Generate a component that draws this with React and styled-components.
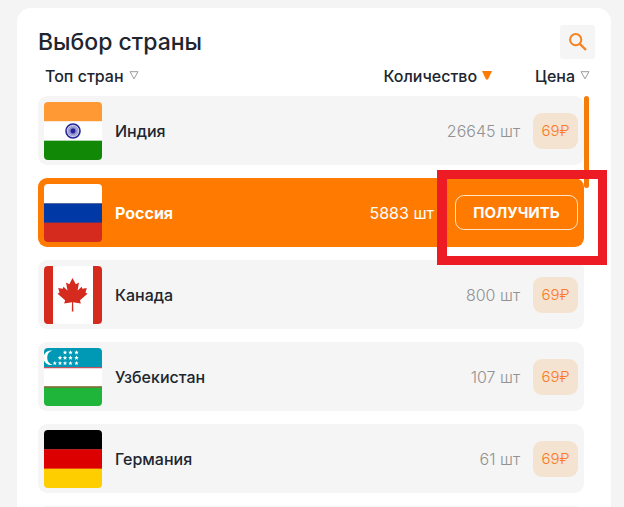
import React from "react";
import styled, { createGlobalStyle, css } from "styled-components";

const GlobalStyle = createGlobalStyle`
  * { box-sizing: border-box; }
  body {
    margin: 0;
    background: #f4f4f4;
    color: #20252f;
    font-family: Inter, "Noto Sans", sans-serif;
    font-size: 16px;
    line-height: 24px;
  }
  button { font: inherit; color: inherit; cursor: pointer; }
`;

const Page = styled.main`
  height: 100vh;
  padding: 8px 13px 0 17px;
  overflow: hidden;
`;

const Card = styled.section`
  height: 100%;
  padding: 17px 16px 0 21px;
  border-radius: 14px 14px 0 0;
  background: #fff;
`;

const TitleBar = styled.header`
  display: flex;
  align-items: center;
  justify-content: space-between;
  height: 34px;
`;

const Title = styled.h1`
  margin: 0;
  font-size: 23px;
  line-height: 34px;
  font-weight: 500;
`;

const SearchButton = styled.button`
  display: grid;
  place-items: center;
  width: 35px;
  height: 34px;
  padding: 0;
  border: 0;
  border-radius: 3px;
  background: #f5f5f6;
`;

const ListArea = styled.div`
  position: relative;
  padding-right: 5px;
`;

const Table = styled.table`
  display: block;
`;

const Head = styled.thead`
  display: block;
`;

const HeadRow = styled.tr`
  display: flex;
  align-items: center;
  gap: 43px;
  height: 37px;
  padding: 0 0 4px 7px;
`;

const HeadCell = styled.th`
  padding: 0;
  text-align: left;
  font-weight: 500;
  flex: ${(p) => (p.$grow ? "1" : "none")};
`;

const SortButton = styled.button`
  display: flex;
  align-items: center;
  gap: 5px;
  padding: 0;
  border: 0;
  background: none;
`;

const Body = styled.tbody`
  display: flex;
  flex-direction: column;
  gap: 13px;
  padding-right: 6px;
`;

const Row = styled.tr`
  position: relative;
  display: flex;
  align-items: center;
  height: 69px;
  padding: 0 6px;
  border-radius: 9px;
  background: #f5f5f5;
  ${(p) =>
    p.$active &&
    css`
      background: #ff7a00;
      color: #fff;
    `}
`;

const Cell = styled.td`
  padding: 0;
`;

const NameCell = styled(Cell)`
  flex: 1;
  padding-left: 13px;
  font-weight: ${(p) => (p.$active ? 700 : 500)};
`;

const CountCell = styled(Cell)`
  padding-right: ${(p) => (p.$active ? "21px" : "13px")};
  font-weight: ${(p) => (p.$active ? 400 : 300)};
  color: ${(p) => (p.$active ? "#fff" : "#929292")};
`;

const Flag = styled.svg`
  display: block;
  width: 58px;
  height: 58px;
  border-radius: 4px;
`;

const Price = styled.span`
  display: grid;
  place-items: center;
  width: 45px;
  height: 36px;
  border-radius: 9px;
  background: #f4e3d0;
  color: #fb7a28;
  font-size: 15px;
  font-weight: 300;
`;

const GetButton = styled.button`
  display: block;
  width: 123px;
  height: 35px;
  padding: 0;
  border: 1px solid #ffe4c8;
  border-radius: 9px;
  background: transparent;
  font-size: 15px;
  font-weight: 700;
`;

const Highlight = styled.span`
  position: absolute;
  z-index: 2;
  top: -8px;
  right: -23px;
  bottom: -18px;
  width: 170px;
  border: 9px solid #ed1b24;
  border-left-width: 10px;
  pointer-events: none;
`;

const ScrollThumb = styled.span`
  position: absolute;
  top: 37px;
  right: 6px;
  width: 5px;
  height: 92px;
  border-radius: 3px;
  background: #f57c08;
`;

function SearchIcon() {
  return (
    <svg width="18" height="18" viewBox="0 0 18 18" fill="none" stroke="#f5821f" strokeWidth="2" aria-hidden="true">
      <circle cx="6.7" cy="6.7" r="5.6" />
      <path d="M10.6 10.6 17 17" strokeWidth="2.3" />
    </svg>
  );
}

function SortIcon({ active }) {
  return (
    <svg width="10" height="9" viewBox="0 0 10 9" aria-hidden="true">
      <path
        d={active ? "M0 0H10L6 8.5H4Z" : "M1 .7H9L5 7.8Z"}
        fill={active ? "#ff7a00" : "none"}
        stroke={active ? "none" : "#9c9c9c"}
        strokeWidth="1"
      />
    </svg>
  );
}

function Stripes({ colors }) {
  return colors.map((color, i) => (
    <rect key={i} y={(i * 58) / 3} width="58" height="19.6" fill={color} />
  ));
}

const uzbekStars = [
  [21, 4.5], [26.5, 4.5], [32.5, 4.5],
  [16, 9.8], [21, 9.8], [26.5, 9.8], [32.5, 9.8],
  [10.8, 15.2], [16, 15.2], [21, 15.2], [26.5, 15.2], [32.5, 15.2],
];

const flagArt = {
  india: (
    <>
      <Stripes colors={["#ff9933", "#ffffff", "#128807"]} />
      <circle cx="29" cy="29" r="7" fill="#dcdcf2" stroke="#24249a" strokeWidth="1.6" />
      <g stroke="#24249a" strokeWidth=".4">
        {Array.from({ length: 12 }, (_, i) => (
          <path key={i} d="M29 23.5V34.5" transform={`rotate(${i * 15} 29 29)`} />
        ))}
      </g>
      <circle cx="29" cy="29" r="2.4" fill="#24249a" />
    </>
  ),
  russia: <Stripes colors={["#ffffff", "#0039a6", "#d52b1e"]} />,
  canada: (
    <>
      <rect width="58" height="58" fill="#fff" />
      <path d="M0 0H9V58H0ZM49 0H58V58H49Z" fill="#d52b1e" />
      <path
        fill="#d52b1e"
        d="M28.5 12 31.8 18.2 35 16.4 33.6 24.5 37.6 20.8 38.4 22.8 42.8 22 41.5 26.5 43.5 27.7 36 34.2 36.8 37.4 29.1 36.2 29.4 45.5H27.8L28 36.2 20.2 37.4 21.1 34.2 13.6 27.7 15.5 26.5 14.2 22 18.7 22.8 19.5 20.8 23.5 24.5 22 16.4 25.3 18.2Z"
      />
    </>
  ),
  uzbekistan: (
    <>
      <Stripes colors={["#0099b5", "#ffffff", "#1eb53a"]} />
      <path d="M0 19H58V20.2H0Z" fill="#c4515c" />
      <path d="M0 38.2H58V39.8H0Z" fill="#8c6a36" />
      <path d="M8.5 2.6A7.3 7.3 0 1 0 8.5 16.8A7.4 7.4 0 0 1 8.5 2.6Z" fill="#fff" />
      {uzbekStars.map(([x, y]) => (
        <path
          key={`${x}-${y}`}
          transform={`translate(${x} ${y})`}
          d="M0-2.2.7-.8 2.1-.7 1 .4 1.4 1.9 0 1.1-1.4 1.9-1 .4-2.1-.7-.7-.8Z"
          fill="#fff"
        />
      ))}
    </>
  ),
  germany: <Stripes colors={["#000000", "#dd0000", "#ffce00"]} />,
};

const countries = [
  { id: "india", name: "Индия", count: 26645, price: 69 },
  { id: "russia", name: "Россия", count: 5883, price: 69, active: true },
  { id: "canada", name: "Канада", count: 800, price: 69 },
  { id: "uzbekistan", name: "Узбекистан", count: 107, price: 69 },
  { id: "germany", name: "Германия", count: 61, price: 69 },
];

function CountryRow({ id, name, count, price, active }) {
  return (
    <Row $active={active}>
      <Cell>
        <Flag viewBox="0 0 58 58" aria-hidden="true">{flagArt[id]}</Flag>
      </Cell>
      <NameCell $active={active}>{name}</NameCell>
      <CountCell $active={active}>{count} шт</CountCell>
      <Cell>
        {active ? (
          <>
            <GetButton type="button">ПОЛУЧИТЬ</GetButton>
            <Highlight />
          </>
        ) : (
          <Price>{price}₽</Price>
        )}
      </Cell>
    </Row>
  );
}

function SortHeader({ children, active, grow }) {
  return (
    <HeadCell scope="col" $grow={grow}>
      <SortButton type="button">
        {children}
        <SortIcon active={active} />
      </SortButton>
    </HeadCell>
  );
}

export default function App() {
  return (
    <>
      <GlobalStyle />
      <Page>
        <Card>
          <TitleBar>
            <Title>Выбор страны</Title>
            <SearchButton type="button" aria-label="Поиск">
              <SearchIcon />
            </SearchButton>
          </TitleBar>
          <ListArea>
            <Table>
              <Head>
                <HeadRow>
                  <SortHeader grow>Топ стран</SortHeader>
                  <SortHeader active>Количество</SortHeader>
                  <SortHeader>Цена</SortHeader>
                </HeadRow>
              </Head>
              <Body>
                {countries.map((country) => (
                  <CountryRow key={country.id} {...country} />
                ))}
                <Row aria-hidden="true" />
              </Body>
            </Table>
            <ScrollThumb />
          </ListArea>
        </Card>
      </Page>
    </>
  );
}
